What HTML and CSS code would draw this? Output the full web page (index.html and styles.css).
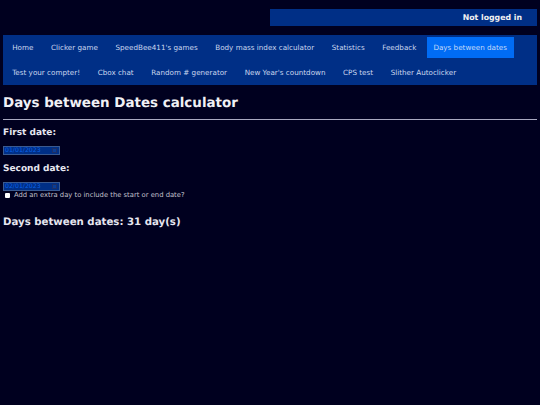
FILE: index.html
```html
<!DOCTYPE html>
<html lang="en">
<head>
<meta charset="utf-8">
<title>Days between Dates calculator</title>
<link rel="stylesheet" href="styles.css">
</head>
<body>
<div class="login-row"><div class="login">Not logged in</div></div>
<nav class="nav">
  <a href="#">Home</a>
  <a href="#">Clicker game</a>
  <a href="#">SpeedBee411's games</a>
  <a href="#">Body mass index calculator</a>
  <a href="#">Statistics</a>
  <a href="#">Feedback</a>
  <a href="#" class="active">Days between dates</a>
  <a href="#">Test your compter!</a>
  <a href="#">Cbox chat</a>
  <a href="#">Random # generator</a>
  <a href="#">New Year's countdown</a>
  <a href="#">CPS test</a>
  <a href="#">Slither Autoclicker</a>
</nav>
<main class="content">
  <h1>Days between Dates calculator</h1>
  <hr>
  <h3>First date:</h3>
  <div class="date"><span>01/01/2023</span><i class="cal"></i></div>
  <h3 class="second">Second date:</h3>
  <div class="date"><span>02/01/2023</span><i class="cal"></i></div>
  <label class="extra"><input type="checkbox"> Add an extra day to include the start or end date?</label>
  <h2>Days between dates: 31 day(s)</h2>
</main>
</body>
</html>
```
FILE: styles.css
```css
html, body { margin: 0; padding: 0; background: #00001f; }
body { font-family: "DejaVu Sans", sans-serif; color: #e6e6f0; height: 405px; overflow: hidden; padding: 9px 3px 0; box-sizing: border-box; text-rendering: geometricPrecision; }
.login-row { display: flex; justify-content: flex-end; }
.login { width: 267px; height: 17px; box-sizing: border-box; background: #002f86; color: #f2f2f2; font-weight: bold; font-size: 7.8px; line-height: 17px; text-align: right; padding-right: 15px; }
.nav { margin-top: 9px; background: #002f86; display: flex; flex-wrap: wrap; padding: 2px 0 0 2px; height: 50px; box-sizing: border-box; align-content: flex-start; width: 534px; }
.nav a { display: block; height: 21px; margin-bottom: 4px; padding: 0 7.2px; margin-right: 3.2px; line-height: 21px; font-size: 7.2px; color: #cbd8ef; text-decoration: none; white-space: nowrap; }
.nav a.active { background: #006cf5; color: #c4daf8; padding: 0 6.6px; }
.content { padding: 0; }
h1 { margin: 10.5px 0 7.5px; font-size: 13.44px; line-height: 16px; color: #f0f0f5; }
hr { margin: 0; border: 0; height: 1px; background: #a9a9c0; }
h3 { margin: 8px 0 7px; font-size: 9px; line-height: 11px; color: #e6e6f0; }
.second { margin: 9px 0 7px; }
.date { height: 7px; width: 55px; background: #002f86; border: 1px solid #3a5a90; display: flex; align-items: center; justify-content: space-between; font-size: 6.2px; line-height: 7px; color: #0a62e6; }
.date span { padding-left: 1px; }
.cal { width: 3px; height: 3px; background: #0a3d96; border: 1px solid #1d2f66; margin-right: 2px; }
.extra { display: flex; align-items: center; gap: 4px; font-size: 6.8px; line-height: 8px; color: #c0c0cc; }
.extra input { appearance: none; margin: 0 0 0 2px; width: 5px; height: 5px; background: #fff; border-radius: 1px; }
h2 { margin: 16.5px 0 0; font-size: 10.2px; line-height: 14px; color: #e6e6f0; }
```
